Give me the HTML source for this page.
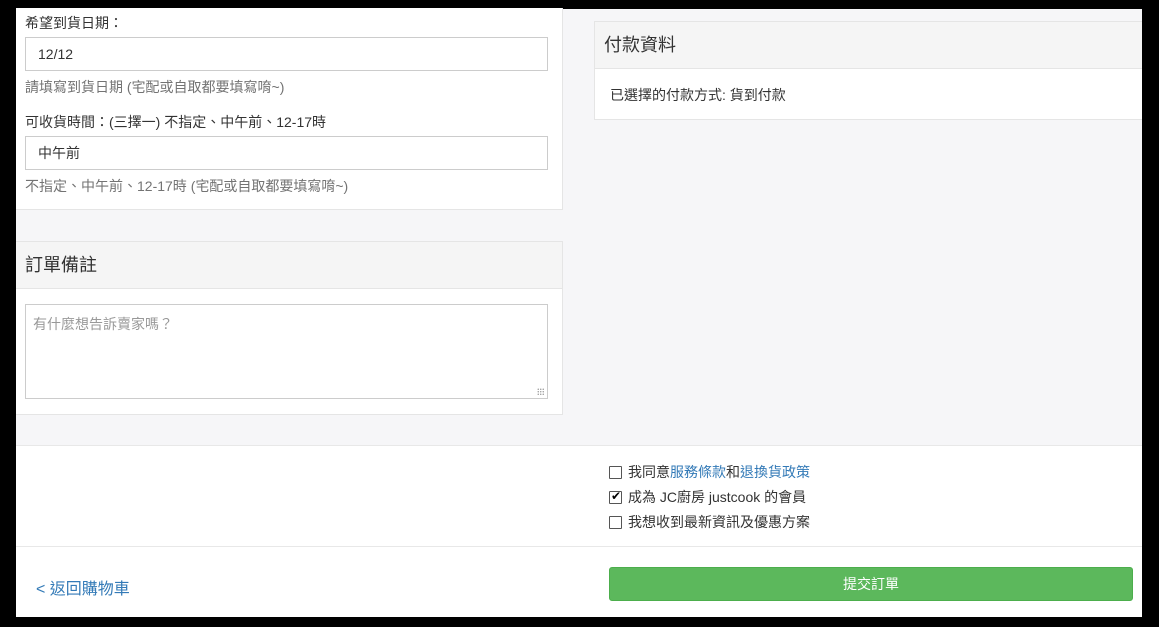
<!DOCTYPE html>
<html><head><meta charset="utf-8"><style>
*{box-sizing:border-box;margin:0;padding:0}
body{width:1159px;height:627px;background:#000;position:relative;overflow:hidden;font-family:"Liberation Sans","Noto Sans CJK TC",sans-serif;font-size:14px;color:#333}
.abs{position:absolute}
#main{left:16px;top:9px;width:1126px;height:608px;background:#f6f6f8}
.panel{background:#fff;border:1px solid #e5e5e5}
.hd{background:#f5f5f5;border-bottom:1px solid #e5e5e5;font-size:18px;padding-left:9px;line-height:46px;color:#333}
.inp{border:1px solid #ccc;background:#fff;height:34px;line-height:32px;padding-left:12px;font-size:14px}
.help{color:#737373;font-size:14px}
a{color:#337ab7;text-decoration:none}
.cb{display:inline-block;width:13px;height:13px;border:1px solid #555;vertical-align:-2px;margin-right:6px;background:#fff;position:relative;border-radius:1px}
</style></head><body>
<div id="main" class="abs">
  <div class="abs panel" style="left:0;top:-1px;width:547px;height:202px;border-top:none;border-left:none">
    <div class="abs" style="left:9px;top:5px">希望到貨日期：</div>
    <div class="abs inp" style="left:9px;top:29px;width:523px">12/12</div>
    <div class="abs help" style="left:9px;top:69px">請填寫到貨日期 (宅配或自取都要填寫唷~)</div>
    <div class="abs" style="left:9px;top:104px">可收貨時間：(三擇一) 不指定、中午前、12-17時</div>
    <div class="abs inp" style="left:9px;top:128px;width:523px">中午前</div>
    <div class="abs help" style="left:9px;top:168px">不指定、中午前、12-17時 (宅配或自取都要填寫唷~)</div>
  </div>
  <div class="abs panel" style="left:0;top:232px;width:547px;height:174px;border-left:none">
    <div class="hd">訂單備註</div>
    <div class="abs" style="left:9px;top:62px;width:523px;height:95px;border:1px solid #ccc;padding:9px 7px;color:#999">有什麼想告訴賣家嗎？
      <div class="abs" style="right:3px;bottom:3px;width:7px;height:7px;background:radial-gradient(circle,#999 0.6px,transparent 0.8px) 0 0/2.5px 2.5px"></div>
    </div>
  </div>
  <div class="abs panel" style="left:578px;top:12px;width:548px;height:99px;border-right:none">
    <div class="hd">付款資料</div>
    <div class="abs" style="left:15px;top:63px">已選擇的付款方式: 貨到付款</div>
  </div>
  <div class="abs" style="left:0;top:436px;width:1126px;height:172px;background:#fff;border-top:1px solid #e8e8e8">
    <div class="abs" style="left:593px;top:16px"><span class="cb"></span>我同意<a>服務條款</a>和<a>退換貨政策</a></div>
    <div class="abs" style="left:593px;top:41px"><span class="cb"><span style="position:absolute;left:1px;top:-3px;font-size:12px;color:#000">✔</span></span>成為 JC廚房 justcook 的會員</div>
    <div class="abs" style="left:593px;top:66px"><span class="cb"></span>我想收到最新資訊及優惠方案</div>
    <div class="abs" style="left:0;top:100px;width:1126px;border-top:1px solid #e8e8e8"></div>
    <div class="abs" style="left:20px;top:129px;font-size:16px"><a>&lt; 返回購物車</a></div>
    <div class="abs" style="left:593px;top:121px;width:524px;height:34px;background:#5cb85c;border:1px solid #4cae4c;border-radius:3px;color:#fff;text-align:center;line-height:32px">提交訂單</div>
  </div>
</div>
</body></html>
